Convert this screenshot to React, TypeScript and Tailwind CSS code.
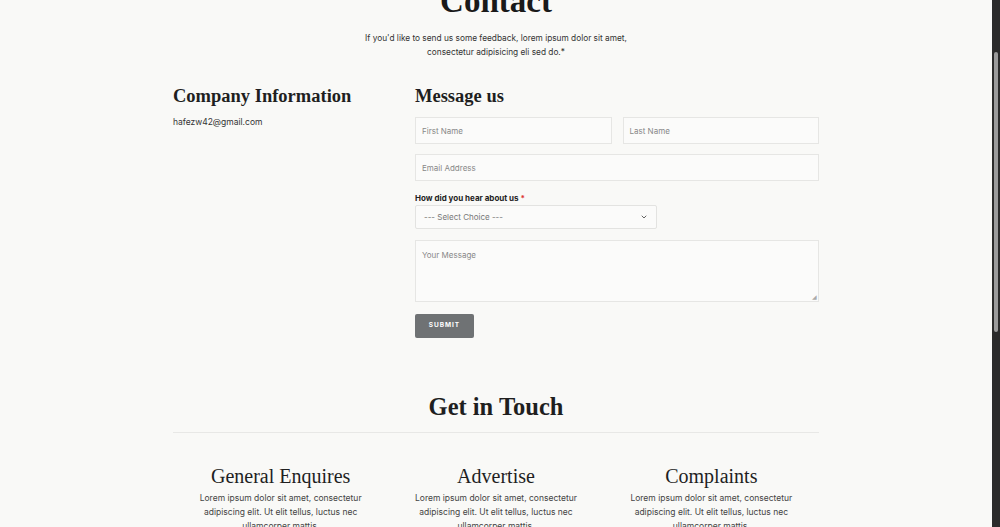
import { ChevronDown } from 'lucide-react';

const serif = { fontFamily: '"Liberation Serif", "DejaVu Serif", serif' };

const columns = [
  { title: 'General Enquires' },
  { title: 'Advertise' },
  { title: 'Complaints' },
];

export default function App() {
  return (
    <div className="flex h-[527px] w-[1000px] overflow-hidden bg-[#f9f9f7] font-['Inter',sans-serif] text-[#222]">
      <div className="flex-1 overflow-hidden">
        {/* Header */}
        <div className="-mt-[18px] flex flex-col items-center">
          <h1 className="text-[33px] font-bold leading-[38px] text-[#1a1a1a]" style={serif}>
            Contact
          </h1>
          <p className="mt-[12px] text-center text-[8.3px] leading-[13.5px] text-[#333]">
            If you'd like to send us some feedback, lorem ipsum dolor sit amet,
            <br />
            consectetur adipisicing eli sed do.*
          </p>
        </div>

        {/* Main */}
        <div className="mx-auto mt-[25px] grid w-[646px] grid-cols-[242px_404px]">
          <div>
            <h2 className="text-[18.5px] font-bold leading-[24px] text-[#1f1f1f]" style={serif}>
              Company Information
            </h2>
            <p className="mt-[8px] text-[8.5px] text-[#333]">hafezw42@gmail.com</p>
          </div>

          <div>
            <h2 className="text-[18.5px] font-bold leading-[24px] text-[#1f1f1f]" style={serif}>
              Message us
            </h2>
            <div className="mt-[9px] grid grid-cols-2 gap-[11px]">
              <div className="flex h-[27px] items-center border border-[#e6e6e4] bg-[#fbfbfa] px-[6px] text-[8px] text-[#888]">
                First Name
              </div>
              <div className="flex h-[27px] items-center border border-[#e6e6e4] bg-[#fbfbfa] px-[6px] text-[8px] text-[#888]">
                Last Name
              </div>
            </div>
            <div className="mt-[10px] flex h-[27px] items-center border border-[#e6e6e4] bg-[#fbfbfa] px-[6px] text-[8px] text-[#888]">
              Email Address
            </div>
            <p className="mt-[11px] text-[8px] font-bold leading-[12px] text-[#222]">
              How did you hear about us <span className="text-[#d33]">*</span>
            </p>
            <div className="mt-[1px] flex h-[24px] w-[242px] items-center justify-between rounded-[2px] border border-[#e3e3e1] bg-[#fbfbfa] px-[8px] text-[8px] text-[#777]">
              <span>--- Select Choice ---</span>
              <ChevronDown size={8} strokeWidth={2.5} className="text-[#444]" />
            </div>
            <div className="relative mt-[11px] h-[62px] border border-[#e6e6e4] bg-[#fbfbfa] px-[6px] pt-[8px] text-[8px] text-[#888]">
              Your Message
              <span className="absolute bottom-[1px] right-[1px] text-[6px] leading-none text-[#aaa]">◢</span>
            </div>
            <button className="mt-[12px] h-[24px] w-[59px] rounded-[2px] bg-[#6f7274] text-[6.5px] font-bold tracking-[0.15em] text-white">
              SUBMIT
            </button>
          </div>
        </div>

        {/* Get in Touch */}
        <div className="mx-auto mt-[54px] w-[646px]">
          <h2 className="text-center text-[24.5px] font-bold leading-[30px] text-[#1f1f1f]" style={serif}>
            Get in Touch
          </h2>
          <div className="mt-[10px] h-px bg-[#e8e8e6]" />
          <div className="mt-[31px] grid grid-cols-3">
            {columns.map((c) => (
              <div key={c.title} className="flex flex-col items-center">
                <h3 className="text-[20px] leading-[24px] text-[#1f1f1f]" style={serif}>
                  {c.title}
                </h3>
                <p className="mt-[3px] w-[180px] text-center text-[8.5px] leading-[14px] text-[#444]">
                  Lorem ipsum dolor sit amet, consectetur adipiscing elit. Ut elit tellus, luctus nec
                  ullamcorper mattis.
                </p>
              </div>
            ))}
          </div>
        </div>
      </div>

      {/* Scrollbar */}
      <div className="flex w-[8px] flex-col items-center bg-[#2b2b2b] pt-[52px]">
        <div className="h-[280px] w-[4px] rounded-[2px] bg-[#9b9b9b]" />
      </div>
    </div>
  );
}
